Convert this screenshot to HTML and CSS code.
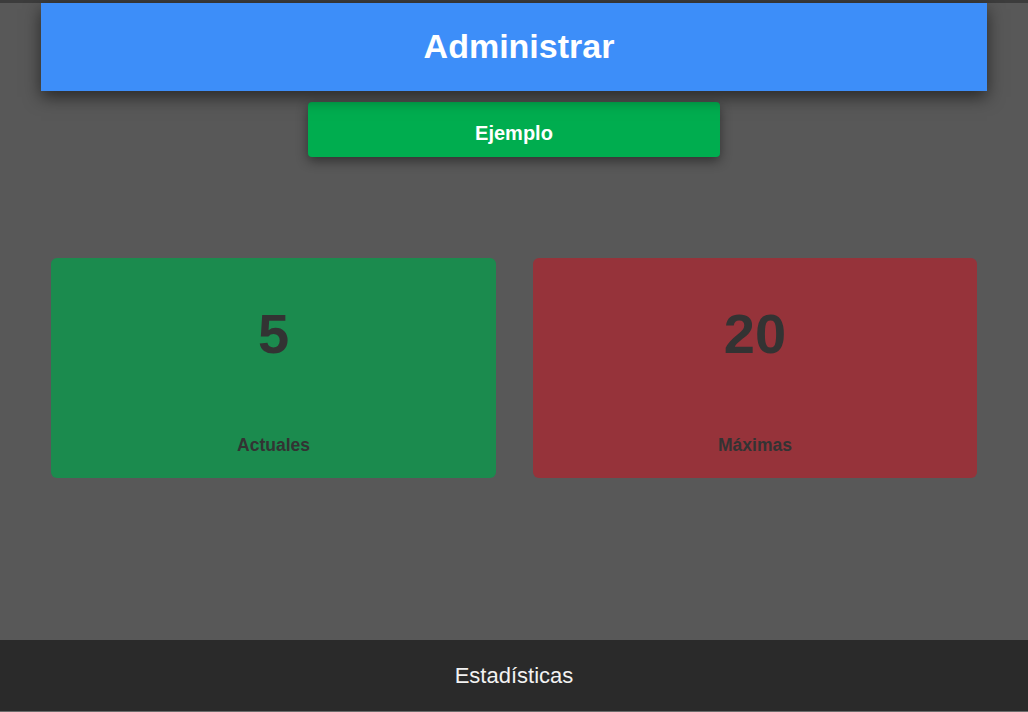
FILE: index.html
```html
<!DOCTYPE html>
<html lang="es">
<head>
<meta charset="utf-8">
<title>Administrar</title>
<link rel="stylesheet" href="styles.css">
</head>
<body>
<div class="app">
  <header class="header">Administrar</header>
  <div class="btn-wrap"><button class="btn">Ejemplo</button></div>
  <section class="stats">
    <div class="card card-green">
      <div class="num">5</div>
      <div class="label">Actuales</div>
    </div>
    <div class="card card-red">
      <div class="num">20</div>
      <div class="label">Máximas</div>
    </div>
  </section>
  <footer class="footer">Estadísticas</footer>
</div>
</body>
</html>
```
FILE: styles.css
```css
html, body {
  margin: 0;
  padding: 0;
}
body {
  background: #585858;
  font-family: "Liberation Sans", Arial, sans-serif;
}
.app {
  box-sizing: border-box;
  height: 712px;
  border-top: 3px solid #3c3c3c;
  display: flex;
  flex-direction: column;
}
.header {
  box-sizing: border-box;
  width: 946px;
  height: 88px;
  margin: 0 auto;
  padding: 0 0 1px 10px;
  background: #3d8ef9;
  color: #fff;
  font-size: 34px;
  font-weight: bold;
  display: flex;
  align-items: center;
  justify-content: center;
  box-shadow: 0 6px 16px rgba(0, 0, 0, 0.55);
  position: relative;
  z-index: 1;
}
.btn-wrap {
  display: flex;
  justify-content: center;
  margin-top: 11px;
}
.btn {
  width: 412px;
  height: 55px;
  border: none;
  border-radius: 4px;
  background: #00ad4f;
  color: #fff;
  font-family: "Liberation Sans", Arial, sans-serif;
  font-size: 20px;
  font-weight: bold;
  padding: 8px 0 0;
  box-shadow: 0 4px 12px rgba(0, 0, 0, 0.45);
}
.stats {
  display: flex;
  justify-content: center;
  gap: 37px;
  margin-top: 101px;
}
.card {
  width: 445px;
  height: 220px;
  box-sizing: border-box;
  border-radius: 6px;
  display: flex;
  flex-direction: column;
  align-items: center;
  color: #333;
  font-weight: bold;
  padding: 44px 0 22px;
}
.card-green { background: #1b8b4e; }
.card-red { background: #96333a; width: 444px; }
.num {
  font-size: 56px;
  line-height: 64px;
}
.label {
  margin-top: auto;
  font-size: 17.5px;
  line-height: 21px;
}
.footer {
  margin-top: auto;
  height: 71px;
  background: #2a2a2a;
  border-bottom: 1px solid #6b6b6b;
  color: #f2f2f2;
  font-size: 22px;
  display: flex;
  align-items: center;
  justify-content: center;
}
```
